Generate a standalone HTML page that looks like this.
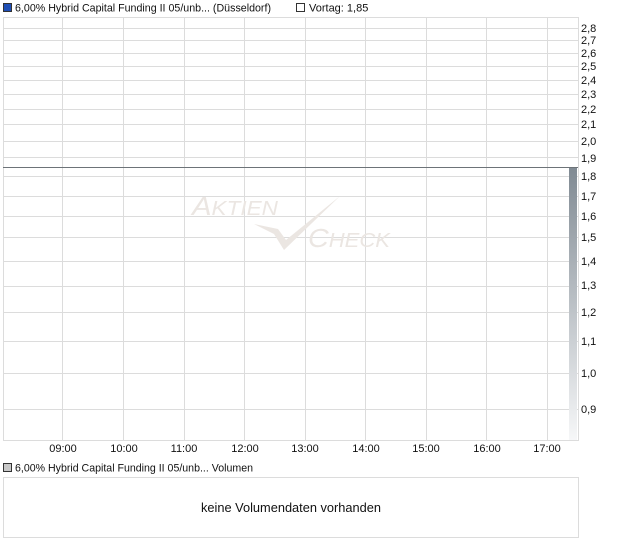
<!DOCTYPE html>
<html><head><meta charset="utf-8"><style>
html,body{margin:0;padding:0;background:#fff;width:620px;height:546px;overflow:hidden}
svg{display:block;font-family:"Liberation Sans",sans-serif}
</style></head><body>
<svg width="620" height="546" viewBox="0 0 620 546">
<defs>
<linearGradient id="g" x1="0" y1="0" x2="0" y2="1">
<stop offset="0" stop-color="#808a93"/><stop offset="1" stop-color="#f6f7f8"/>
</linearGradient>
</defs>
<rect x="3.5" y="3.5" width="8" height="8" fill="#1f4fb5" stroke="#333" stroke-width="1"/>
<text x="15" y="11.5" font-size="11" fill="#111" textLength="256" lengthAdjust="spacingAndGlyphs">6,00% Hybrid Capital Funding II 05/unb... (Düsseldorf)</text>
<rect x="296.5" y="3.5" width="8" height="8" fill="#fff" stroke="#333" stroke-width="1"/>
<text x="309" y="11.5" font-size="11" fill="#111">Vortag: 1,85</text>
<g stroke="#dcdcdc" stroke-width="1">
<line x1="3" y1="28.5" x2="578" y2="28.5"/><line x1="3" y1="40.5" x2="578" y2="40.5"/>
<line x1="3" y1="53.5" x2="578" y2="53.5"/><line x1="3" y1="66.5" x2="578" y2="66.5"/>
<line x1="3" y1="80.5" x2="578" y2="80.5"/><line x1="3" y1="94.5" x2="578" y2="94.5"/>
<line x1="3" y1="109.5" x2="578" y2="109.5"/><line x1="3" y1="124.5" x2="578" y2="124.5"/>
<line x1="3" y1="141.5" x2="578" y2="141.5"/><line x1="3" y1="157.5" x2="578" y2="157.5"/>
<line x1="3" y1="176.5" x2="578" y2="176.5"/><line x1="3" y1="196.5" x2="578" y2="196.5"/>
<line x1="3" y1="216.5" x2="578" y2="216.5"/><line x1="3" y1="237.5" x2="578" y2="237.5"/>
<line x1="3" y1="261.5" x2="578" y2="261.5"/><line x1="3" y1="286.5" x2="578" y2="286.5"/>
<line x1="3" y1="312.5" x2="578" y2="312.5"/><line x1="3" y1="341.5" x2="578" y2="341.5"/>
<line x1="3" y1="373.5" x2="578" y2="373.5"/><line x1="3" y1="409.5" x2="578" y2="409.5"/>
<line x1="62.5" y1="17" x2="62.5" y2="440"/><line x1="123.5" y1="17" x2="123.5" y2="440"/>
<line x1="184.5" y1="17" x2="184.5" y2="440"/><line x1="244.5" y1="17" x2="244.5" y2="440"/>
<line x1="305.5" y1="17" x2="305.5" y2="440"/><line x1="365.5" y1="17" x2="365.5" y2="440"/>
<line x1="426.5" y1="17" x2="426.5" y2="440"/><line x1="486.5" y1="17" x2="486.5" y2="440"/>
<line x1="547.5" y1="17" x2="547.5" y2="440"/>
</g>
<rect x="3.5" y="17.5" width="575" height="423" fill="none" stroke="#dcdcdc"/>
<g fill="#ebe6e2" font-style="italic" font-size="26">
<text x="192" y="215" textLength="86" lengthAdjust="spacingAndGlyphs">A<tspan font-size="20">KTIEN</tspan></text>
<text x="308" y="247" textLength="82" lengthAdjust="spacingAndGlyphs">C<tspan font-size="20">HECK</tspan></text>
</g>
<path d="M254 224 L274 234 L284 250 L340 196 L286 240 L278 229 Z" fill="#ebe6e2"/>
<rect x="569" y="167" width="8" height="273" fill="url(#g)"/>
<line x1="3" y1="167.5" x2="578" y2="167.5" stroke="#6d7378" stroke-width="1"/>
<g font-size="11" fill="#111">
<text x="581" y="32">2,8</text><text x="581" y="44">2,7</text><text x="581" y="57">2,6</text>
<text x="581" y="70">2,5</text><text x="581" y="84">2,4</text><text x="581" y="98">2,3</text>
<text x="581" y="113">2,2</text><text x="581" y="128">2,1</text><text x="581" y="145">2,0</text>
<text x="581" y="162">1,9</text><text x="581" y="180">1,8</text><text x="581" y="200">1,7</text>
<text x="581" y="220">1,6</text><text x="581" y="241">1,5</text><text x="581" y="265">1,4</text>
<text x="581" y="289">1,3</text><text x="581" y="316">1,2</text><text x="581" y="345">1,1</text>
<text x="581" y="377">1,0</text><text x="581" y="413">0,9</text>
</g>
<g font-size="11" fill="#111" text-anchor="middle">
<text x="63" y="452">09:00</text><text x="124" y="452">10:00</text><text x="184" y="452">11:00</text>
<text x="245" y="452">12:00</text><text x="305" y="452">13:00</text><text x="366" y="452">14:00</text>
<text x="426" y="452">15:00</text><text x="487" y="452">16:00</text><text x="547" y="452">17:00</text>
</g>
<rect x="3.5" y="463.5" width="8" height="8" fill="#c8c8c8" stroke="#333"/>
<text x="15" y="471.5" font-size="11" fill="#111" textLength="238" lengthAdjust="spacingAndGlyphs">6,00% Hybrid Capital Funding II 05/unb... Volumen</text>
<rect x="3.5" y="477.5" width="575" height="60" fill="#fff" stroke="#dcdcdc"/>
<text x="201" y="512" font-size="13" fill="#111" textLength="180" lengthAdjust="spacingAndGlyphs">keine Volumendaten vorhanden</text>
</svg>
</body></html>
